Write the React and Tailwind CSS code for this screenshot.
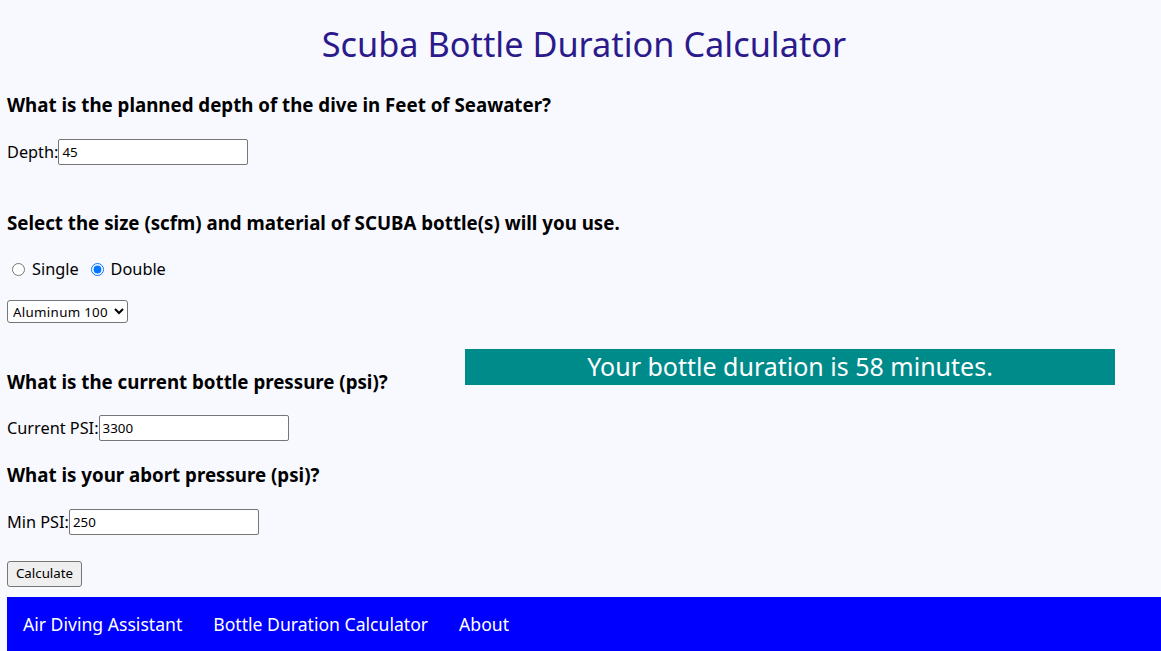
const FONT = '[font-family:"Noto_Sans",sans-serif]'

function Field({ label, value }) {
  return (
    <div className="flex h-[26px] items-center">
      <label className="text-[16.3px] text-black">{label}</label>
      <input
        type="text"
        defaultValue={value}
        className="h-[26px] w-[190px] rounded-[2px] border border-[#767676] bg-white px-[3px] text-[13.33px] text-black"
      />
    </div>
  )
}

function Question({ children, className = '' }) {
  return (
    <h3 className={`text-[18.72px] font-bold leading-[26px] text-black ${className}`}>{children}</h3>
  )
}

export default function App() {
  return (
    <div className={`min-h-[651px] bg-[#f8f8ff] pl-[7px] ${FONT}`}>
      <h1 className="pt-[22px] text-center text-[34.3px] leading-[44px] text-[#2b1a8b]">
        Scuba Bottle Duration Calculator
      </h1>

      <Question className="mt-[26px]">What is the planned depth of the dive in Feet of Seawater?</Question>
      <div className="mt-[21px]">
        <Field label="Depth:" value="45" />
      </div>

      <Question className="mt-[45px]">Select the size (scfm) and material of SCUBA bottle(s) will you use.</Question>
      <div className="mt-[23px] flex h-[20px] items-center text-[16.3px] text-black">
        <input type="radio" name="count" className="ml-[5px] mr-[7px] h-[13px] w-[13px]" />
        <span>Single</span>
        <input type="radio" name="count" defaultChecked className="ml-[12px] mr-[7px] h-[13px] w-[13px]" />
        <span>Double</span>
      </div>
      <div className="mt-[21px] flex h-[23px]">
        <select
          defaultValue="al100"
          className="h-[23px] w-[121px] rounded-[3px] border border-[#767676] bg-white pl-px text-[13.33px] tracking-[0.3px] text-black"
        >
          <option value="al80">Aluminum 80</option>
          <option value="al100">Aluminum 100</option>
          <option value="st100">Steel 100</option>
        </select>
      </div>

      <div className="mt-[26px] flex items-start">
        <div className="flex flex-col items-start">
          <Question className="mt-[20px]">What is the current bottle pressure (psi)?</Question>
          <div className="mt-[20px]">
            <Field label="Current PSI:" value="3300" />
          </div>
          <Question className="mt-[21px]">What is your abort pressure (psi)?</Question>
          <div className="mt-[21px]">
            <Field label="Min PSI:" value="250" />
          </div>
          <button className="mt-[26px] h-[26px] w-[75px] rounded-[3px] border border-[#767676] bg-[#efefef] text-[13.33px] text-black">
            Calculate
          </button>
        </div>
        <div className="ml-auto mr-[46px] flex h-[36px] w-[650px] items-center justify-center bg-[#008b8b] text-[25px] text-white">
          Your bottle duration is 58 minutes.
        </div>
      </div>

      <nav className="mt-[10px] flex h-[54px] items-center gap-[31px] bg-[#0000ff] px-[16px] text-[17.6px] text-white">
        <a href="#">Air Diving Assistant</a>
        <a href="#">Bottle Duration Calculator</a>
        <a href="#">About</a>
      </nav>
    </div>
  )
}
